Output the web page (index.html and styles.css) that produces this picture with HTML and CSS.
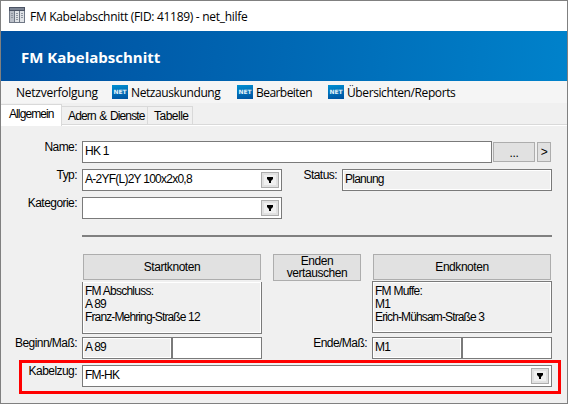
FILE: index.html
```
<!DOCTYPE html>
<html lang="de">
<head>
    <meta charset="UTF-8">
    <title>FM Kabelabschnitt</title>
    <link rel="stylesheet" href="styles.css">
</head>
<body>
    <div class="window">
        <div class="titlebar">
            <svg class="app-icon" width="16" height="16" viewBox="0 0 16 16" shape-rendering="crispEdges">
                <rect width="16" height="16" fill="#6f7785"/>
                <rect width="16" height="4" fill="#4b5364"/>
                <rect x="1" y="1" width="14" height="2" fill="#7c8493"/>
                <rect x="1" y="4" width="4" height="11" fill="#b9bec7"/>
                <rect x="6" y="4" width="4" height="11" fill="#dfe2e6"/>
                <rect x="11" y="4" width="4" height="11" fill="#dfe2e6"/>
                <path d="M2 6.500h2M2 8.500h2M2 10.500h2M7 6.500h2M7 8.500h2M7 10.500h2M7 12.500h2M12 6.500h2M12 8.500h2M12 10.500h2" stroke="#8f95a0"/>
            </svg>
            <span class="title">FM Kabelabschnitt (FID: 41189) - net_hilfe</span>
        </div>
        <div class="header"><span class="heading">FM Kabelabschnitt</span></div>
        <div class="menu">
            <span class="menu-item first">Netzverfolgung</span>
            <span class="net">NET</span>
            <span class="menu-item second">Netzauskundung</span>
            <span class="net">NET</span>
            <span class="menu-item third">Bearbeiten</span>
            <span class="net">NET</span>
            <span class="menu-item fourth">Übersichten/Reports</span>
        </div>
        <div class="tabs">
            <div class="tab active">Allgemein</div>
            <div class="tab wide">Adern &amp; Dienste</div>
            <div class="tab">Tabelle</div>
        </div>

        <div class="form">
            <div class="row">
                <label class="label">Name:</label>
                <div class="field name">HK 1</div>
                <div class="button more">...</div>
                <div class="button next">&gt;</div>
            </div>
            <div class="row">
                <label class="label">Typ:</label>
                <div class="field select typ">A-2YF(L)2Y 100x2x0,8<span class="arrow"><svg width="6" height="6"><path d="M0 0h6v2L4 4v2H2V4L0 2z"/></svg></span></div>
                <label class="label status">Status:</label>
                <div class="field readonly grow">Planung</div>
            </div>
            <div class="row">
                <label class="label">Kategorie:</label>
                <div class="field select typ"><span class="arrow"><svg width="6" height="6"><path d="M0 0h6v2L4 4v2H2V4L0 2z"/></svg></span></div>
            </div>
            <div class="line"></div>

            <div class="nodes">
                <div class="node">
                    <div class="button">Startknoten</div>
                    <div class="field readonly info start">FM Abschluss:<br>A 89<br><span class="street">Franz-Mehring-Straße 12</span></div>
                </div>
                <div class="button swap">Enden vertauschen</div>
                <div class="node">
                    <div class="button">Endknoten</div>
                    <div class="field readonly info">FM Muffe:<br>M1<br><span class="street">Erich-Mühsam-Straße 3</span></div>
                </div>
            </div>
            <div class="row ends">
                <label class="label">Beginn/Maß:</label>
                <div class="field readonly half">A 89</div>
                <div class="field half"></div>
                <label class="label ende">Ende/Maß:</label>
                <div class="field readonly half">M1</div>
                <div class="field half"></div>
            </div>
            <div class="row marked">
                <label class="label">Kabelzug:</label>
                <div class="field select grow">FM-HK<span class="arrow"><svg width="6" height="6"><path d="M0 0h6v2L4 4v2H2V4L0 2z"/></svg></span></div>
            </div>
        </div>
    </div>
</body>
</html>
```
FILE: styles.css
```
* {
    box-sizing: border-box;
}
body {
    margin: 0;
    font-family: "Liberation Sans", Arial, sans-serif;
    font-size: 12px;
    letter-spacing: -0.55px;
    color: #000;
}
.window {
    width: 568px;
    height: 404px;
    border: 1px solid #808080;
    background: #f0f0f0;
    overflow: hidden;
}
.titlebar {
    height: 30px;
    background: #fff;
    display: flex;
    align-items: center;
    padding: 0 0 0 8px;
    font-family: "Open Sans", sans-serif;
}
.app-icon {
    margin: 0 5px 2px 0;
}
.title {
    letter-spacing: -0.3px;
}
.header {
    height: 50px;
    padding-left: 20px;
    background: linear-gradient(95deg, #004f9f, #0068b4 50%, #0082cb);
    color: #fff;
    font: bold 15px/52px "Open Sans", sans-serif;
    letter-spacing: 0;
}
.menu {
    height: 22px;
    background: #f5f5f5;
    display: flex;
    align-items: center;
    padding-left: 15px;
    font-family: "Open Sans", sans-serif;
    letter-spacing: -0.4px;
    white-space: nowrap;
}
.menu-item {
    padding-top: 2px;
    line-height: 20px;
}
.menu-item.first {
    width: 96px;
    letter-spacing: -0.25px;
}
.menu-item.second {
    width: 106px;
}
.menu-item.third {
    width: 72px;
    letter-spacing: -0.55px;
}
.net {
    width: 16px;
    height: 14px;
    margin-right: 3px;
    background: linear-gradient(170deg, #0090d2, #00509f);
    color: #e5f2fa;
    font: bold 6px/14px "DejaVu Sans", sans-serif;
    letter-spacing: 0;
    text-align: center;
}
.tabs {
    height: 23px;
    display: flex;
    align-items: flex-end;
    border-bottom: 1px solid #fff;
    box-shadow: inset 0 -1px #d9d9d9;
}
.tab {
    height: 19px;
    border: 1px solid #d9d9d9;
    border-left: 0;
    width: 45px;
    padding-left: 6px;
    line-height: 19px;
    letter-spacing: -0.5px;
    white-space: nowrap;
}
.tab.active {
    width: 61px;
    height: 22px;
    margin-bottom: -1px;
    padding-left: 8px;
    background: #fff;
    border-bottom: 0;
    line-height: 19px;
    letter-spacing: -0.9px;
}
.tab.wide {
    width: 86px;
    letter-spacing: -0.85px;
    word-spacing: 1px;
}
.tab.active {
    letter-spacing: -0.9px;
}
.form {
    padding: 15px 15px 0 0;
}
.row {
    display: flex;
    height: 22px;
    margin-bottom: 6px;
}
.label {
    width: 81px;
    padding-right: 5px;
    text-align: right;
    line-height: 12px;
    white-space: nowrap;
}
.field {
    height: 22px;
    border: 1px solid #7a7a7a;
    background: #fff;
    padding-left: 2px;
    line-height: 19px;
    letter-spacing: -0.75px;
    white-space: nowrap;
}
.readonly {
    background: #f0f0f0;
    box-shadow: inset 0 0 0 1px #fff;
}
.name {
    width: 410px;
}
.button {
    border: 1px solid #adadad;
    background: #e1e1e1;
    text-align: center;
}
.more {
    width: 42px;
    height: 20px;
    margin: 1px 2px 0 1px;
    line-height: 20px;
    letter-spacing: -0.3px;
}
.next {
    width: 14px;
    height: 20px;
    margin-top: 1px;
    line-height: 18px;
}
.typ {
    width: 200px;
}
.grow {
    flex: 1;
}
.select {
    display: flex;
}
.arrow {
    width: 18px;
    height: 16px;
    margin: 2px 2px 0 auto;
    border: 1px solid #adadad;
    background: #f0f0f0;
    box-shadow: inset 0 0 0 2px #e1e1e1;
    display: flex;
    align-items: center;
    justify-content: center;
}
.status {
    width: 60px;
}
.line {
    height: 2px;
    margin: 16px 0 17px 81px;
    background: #808080;
}
.nodes {
    display: flex;
    margin-left: 81px;
    gap: 11px;
    height: 80px;
    letter-spacing: -0.45px;
}
.node {
    width: 180px;
}
.node .button {
    width: 178px;
    height: 26px;
    margin: 0 1px 1px;
    line-height: 25px;
}
.node .info {
    height: 52px;
    padding: 3px 2px 0;
    line-height: 13px;
}
.node .start {
    margin-top: 2px;
    border-top: 0;
}
.street {
    letter-spacing: -0.87px;
}
.swap {
    width: 88px;
    height: 27px;
    padding: 0 10px;
    line-height: 12px;
}
.ends {
    margin: 3px 0 1px;
}
.half {
    width: 90px;
}
.ende {
    width: 110px;
}
.marked {
    width: 542px;
    height: 34px;
    margin: 0 0 0 18px;
    border: 3px solid #f00;
    padding: 2px 6px 0 0;
}
.marked .label {
    width: 60px;
}
```
